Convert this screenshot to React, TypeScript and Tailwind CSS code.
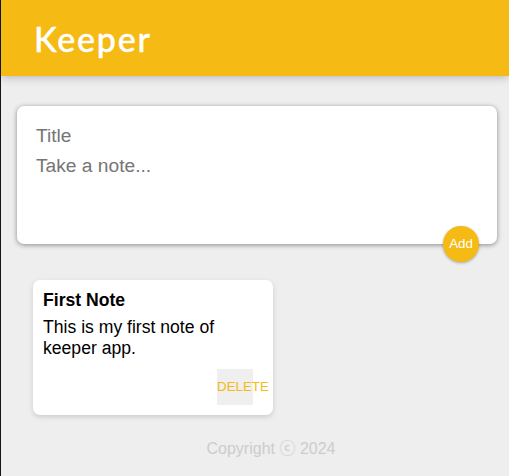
import React from "react";

function Header() {
  return (
    <header className="h-[76px] bg-[#f5ba13] px-[33px] pt-[14px] shadow-[0_0_10px_rgba(0,0,0,0.3)]">
      <h1 className="font-['Lato','Liberation_Sans',sans-serif] text-[34px] leading-[49px] font-medium tracking-[1.8px] text-white [-webkit-text-stroke:0.4px_white]">
        Keeper
      </h1>
    </header>
  );
}

function CreateArea() {
  return (
    <form className="relative mt-[30px] mr-[12px] ml-[16px] flex h-[138px] flex-col rounded-[7px] bg-white px-[19px] pt-[15px] shadow-[0_1px_5px_rgb(138,137,137)]">
      <input
        placeholder="Title"
        className="h-[30px] w-full bg-transparent text-[19.2px] outline-none placeholder:text-[#757575]"
      />
      <textarea
        placeholder="Take a note..."
        className="h-[72px] w-full resize-none bg-transparent pt-[3px] text-[19.2px] leading-[24px] outline-none placeholder:text-[#757575]"
      />
      <button
        type="button"
        className="absolute right-[18px] bottom-[-18px] size-[36px] rounded-full bg-[#f5ba13] text-[13.33px] text-white shadow-[0_1px_3px_rgba(0,0,0,0.3)]"
      >
        Add
      </button>
    </form>
  );
}

function Note({ title, content }: { title: string; content: string }) {
  return (
    <article className="mt-[36px] ml-[32px] flex h-[135px] w-[240px] flex-col rounded-[7px] bg-white p-[10px] shadow-[0_2px_5px_#ccc]">
      <h2 className="text-[17.6px] leading-[20px] font-bold text-black">{title}</h2>
      <p className="mt-[7px] text-[17.6px] leading-[21px] text-black">{content}</p>
      <button
        type="button"
        className="mt-auto mr-[10px] flex size-[36px] shrink-0 items-center self-end bg-[#efefef] text-[13.33px] text-[#f5ba13]"
      >
        DELETE
      </button>
    </article>
  );
}

export default function App() {
  return (
    <div className="flex h-[476px] w-[509px] flex-col overflow-hidden border-l border-[#171419] bg-[#eee] font-['Liberation_Sans','Noto_Sans_CJK_JP',sans-serif]">
      <Header />
      <CreateArea />
      <Note title="First Note" content="This is my first note of keeper app." />
      <footer className="mt-[22px] ml-[32px] text-center text-[16px] leading-[24px] text-[#ccc]">
        Copyright ⓒ 2024
      </footer>
    </div>
  );
}
